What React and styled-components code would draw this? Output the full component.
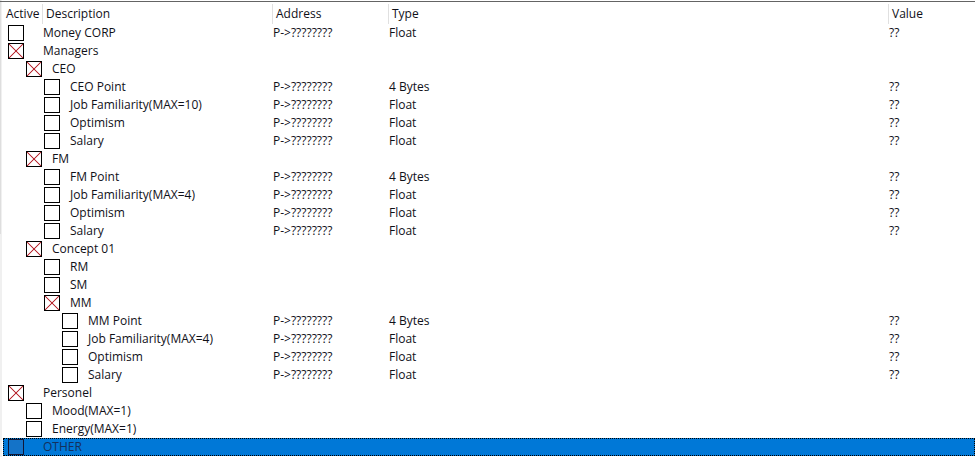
import React, { useState } from 'react';
import styled, { createGlobalStyle } from 'styled-components';

const GlobalStyle = createGlobalStyle`
  body {
    margin: 0;
    background: #fff;
  }
`

const Panel = styled.div`
  padding: 4px 0 1px 3px;
  background:
    linear-gradient(#646464, #646464) 0 1px / 100% 1px no-repeat,
    linear-gradient(#dedede, #dedede) 0 0 / 1px 234px no-repeat,
    linear-gradient(#f0f0f0, #f0f0f0) 0 0 / 2px 100% no-repeat;
`

const Table = styled.table`
  width: 100%;
  table-layout: fixed;
  border-spacing: 0;
  border-collapse: separate;
  font-family: 'Open Sans', 'Noto Sans', sans-serif;
  font-size: 12px;
  line-height: 18px;
  color: #101018;
`

const Col = styled.col`
  width: ${props => props.$width};
`

const HeadCell = styled.th`
  height: 20px;
  padding: 1px 0 1px 3px;
  box-sizing: border-box;
  border-right: 1px solid #e0e0e0;
  font-weight: normal;
  text-align: left;
  white-space: nowrap;

  &:last-child {
    border-right: none;
  }
`

const Row = styled.tr`
  background: ${props => (props.$selected ? '#0078d7' : 'transparent')};
  color: ${props => (props.$selected ? '#14305c' : 'inherit')};
  outline: ${props => (props.$selected ? '1px dotted #000' : 'none')};
  outline-offset: -1px;
`

const Cell = styled.td`
  height: 18px;
  padding: 0;
  white-space: nowrap;
`

const Entry = styled.div`
  display: flex;
  align-items: center;
  gap: ${props => (props.$level === 0 ? '19px' : '10px')};
  padding-left: ${props => 5 + props.$level * 18}px;
`

const CheckBox = styled.input`
  appearance: none;
  flex: none;
  width: 16px;
  height: 16px;
  margin: 0;
  border: 1px solid ${props => (props.$selected ? '#101838' : '#000')};
  background: ${props => (props.$selected ? '#1473c8' : '#fff')};

  &:checked {
    background:
      linear-gradient(45deg, transparent 46%, #b82830 48%, #b82830 52%, transparent 54%),
      linear-gradient(-45deg, transparent 46%, #b82830 48%, #b82830 52%, transparent 54%),
      #fff;
  }
`

const POINTER = 'P->????????';

const entries = [
  { name: 'Money CORP', level: 0, type: 'Float' },
  { name: 'Managers', level: 0, active: true },
  { name: 'CEO', level: 1, active: true },
  { name: 'CEO Point', level: 2, type: '4 Bytes' },
  { name: 'Job Familiarity(MAX=10)', level: 2, type: 'Float' },
  { name: 'Optimism', level: 2, type: 'Float' },
  { name: 'Salary', level: 2, type: 'Float' },
  { name: 'FM', level: 1, active: true },
  { name: 'FM Point', level: 2, type: '4 Bytes' },
  { name: 'Job Familiarity(MAX=4)', level: 2, type: 'Float' },
  { name: 'Optimism', level: 2, type: 'Float' },
  { name: 'Salary', level: 2, type: 'Float' },
  { name: 'Concept 01', level: 1, active: true },
  { name: 'RM', level: 2 },
  { name: 'SM', level: 2 },
  { name: 'MM', level: 2, active: true },
  { name: 'MM Point', level: 3, type: '4 Bytes' },
  { name: 'Job Familiarity(MAX=4)', level: 3, type: 'Float' },
  { name: 'Optimism', level: 3, type: 'Float' },
  { name: 'Salary', level: 3, type: 'Float' },
  { name: 'Personel', level: 0, active: true },
  { name: 'Mood(MAX=1)', level: 1 },
  { name: 'Energy(MAX=1)', level: 1 },
  { name: 'OTHER', level: 0 },
];

function App() {
  const [active, setActive] = useState(entries.map(entry => !!entry.active));
  const [selected, setSelected] = useState(entries.length - 1);

  const toggle = index => {
    setActive(active.map((value, i) => (i === index ? !value : value)));
  };

  return (
    <>
      <GlobalStyle />
      <Panel>
        <Table>
          <colgroup>
            <Col $width="40px" />
            <Col $width="230px" />
            <Col $width="116px" />
            <Col $width="auto" />
            <Col $width="86px" />
          </colgroup>
          <thead>
            <tr>
              <HeadCell>Active</HeadCell>
              <HeadCell>Description</HeadCell>
              <HeadCell>Address</HeadCell>
              <HeadCell>Type</HeadCell>
              <HeadCell>Value</HeadCell>
            </tr>
          </thead>
          <tbody>
            {entries.map((entry, index) => (
              <Row
                key={index}
                $selected={index === selected}
                onClick={() => setSelected(index)}
              >
                <Cell colSpan={2}>
                  <Entry $level={entry.level}>
                    <CheckBox
                      type="checkbox"
                      id={`entry-${index}`}
                      checked={active[index]}
                      $selected={index === selected}
                      onChange={() => toggle(index)}
                    />
                    <label htmlFor={`entry-${index}`}>{entry.name}</label>
                  </Entry>
                </Cell>
                <Cell>{entry.type && POINTER}</Cell>
                <Cell>{entry.type}</Cell>
                <Cell>{entry.type && '??'}</Cell>
              </Row>
            ))}
          </tbody>
        </Table>
      </Panel>
    </>
  );
}

export default App;
